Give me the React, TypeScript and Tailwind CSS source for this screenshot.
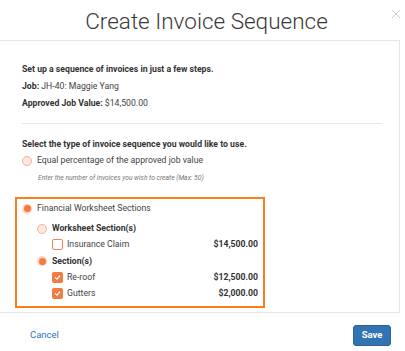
import React from "react";

const Radio = ({ checked }: { checked?: boolean }) => {
    if (checked) {
        return (
            <span className="flex items-center justify-center w-[10px] h-[10px] rounded-full bg-[#fcd4c0] shrink-0">
                <span className="w-[7px] h-[7px] rounded-full bg-[#f47a42]"></span>
            </span>
        );
    }
    return (
        <span className="block w-[10px] h-[10px] rounded-full bg-[#fde9df] border border-[#f6b293] shrink-0"></span>
    );
};

const Checkbox = ({ checked }: { checked?: boolean }) => {
    if (checked) {
        return (
            <span className="flex items-center justify-center w-[11px] h-[11px] rounded-[2px] bg-[#f47a42] shrink-0">
                <svg width="7" height="7" viewBox="0 0 10 10" fill="none">
                    <path
                        d="M2 5.2 L4.2 7.3 L8.2 2.8"
                        stroke="white"
                        strokeWidth="1.8"
                        strokeLinecap="round"
                        strokeLinejoin="round"
                    />
                </svg>
            </span>
        );
    }
    return (
        <span className="block w-[11px] h-[11px] rounded-[2px] border border-[#f0865a] bg-white shrink-0"></span>
    );
};

const ItemRow = ({
    label,
    amount,
    checked,
}: {
    label: string;
    amount: string;
    checked?: boolean;
}) => {
    return (
        <div className="flex items-center h-[16.4px] pl-[29.5px]">
            <Checkbox checked={checked}></Checkbox>
            <span className="ml-[4.5px] text-[#444]">{label}</span>
            <span className="ml-auto font-bold text-[#333]">{amount}</span>
        </div>
    );
};

const App = () => {
    return (
        <div
            className="w-[405px] h-[351px] bg-white overflow-hidden text-[8.7px] text-[#333]"
            style={{ fontFamily: "Roboto, 'Liberation Sans', sans-serif" }}
        >
            <div className="relative h-[40px] flex justify-center items-center">
                <h1 className="text-[22.5px] font-light text-[#3a3a3a] leading-none pt-[3px] pl-[8px]">
                    Create Invoice Sequence
                </h1>
                <span className="absolute right-[4px] top-[9px] text-[#c8c8c8]">
                    <svg width="10" height="10" viewBox="0 0 10 10">
                        <path d="M1 1 L9 9 M9 1 L1 9" stroke="currentColor" strokeWidth="0.9" />
                    </svg>
                </span>
            </div>

            <div className="w-[400px] h-[273px] border-t border-r border-b border-[#e6e6e6] pl-[22px] pr-[17px] pt-[20px]">
                <div className="leading-[17px]">
                    <p className="font-bold">Set up a sequence of invoices in just a few steps.</p>
                    <p>
                        <span className="font-bold">Job:</span>{" "}
                        <span className="text-[#444]">JH-40: Maggie Yang</span>
                    </p>
                    <p>
                        <span className="font-bold">Approved Job Value:</span>{" "}
                        <span className="text-[#444]">$14,500.00</span>
                    </p>
                </div>

                <div className="mt-[10.5px] border-t border-[#e6e6e6]"></div>

                <p className="mt-[12px] font-bold leading-[17px]">
                    Select the type of invoice sequence you would like to use.
                </p>
                <div className="flex items-center gap-[5px] h-[16px]">
                    <Radio></Radio>
                    <span className="text-[#444]">Equal percentage of the approved job value</span>
                </div>
                <p className="mt-[3.5px] pl-[16px] text-[6.7px] italic text-[#777] leading-[12px]">
                    Enter the number of invoices you wish to create (Max: 50)
                </p>

                <div className="mt-[12.5px] -ml-[7px] w-[250px] border-2 border-[#f7801e] pt-[2px] pb-[4px] pl-[5px] pr-[5px]">
                    <div className="flex items-center gap-[5px] h-[16px]">
                        <Radio checked></Radio>
                        <span className="text-[#444]">Financial Worksheet Sections</span>
                    </div>
                    <div className="mt-[4px] flex items-center gap-[5px] h-[16px] pl-[15px]">
                        <Radio></Radio>
                        <span className="font-bold">Worksheet Section(s)</span>
                    </div>
                    <ItemRow label="Insurance Claim" amount="$14,500.00"></ItemRow>
                    <div className="flex items-center gap-[5px] h-[16.4px] pl-[15px]">
                        <Radio checked></Radio>
                        <span className="font-bold">Section(s)</span>
                    </div>
                    <ItemRow label="Re-roof" amount="$12,500.00" checked></ItemRow>
                    <ItemRow label="Gutters" amount="$2,000.00" checked></ItemRow>
                </div>
            </div>

            <div className="flex justify-between items-center pl-[30px] pr-[14px] pt-[12px]">
                <button className="text-[#2f74b9] text-[9.5px]">Cancel</button>
                <button className="w-[38px] h-[21px] rounded-[3px] bg-[#3273b1] text-white font-bold text-[9.5px] border border-[#2a649c]">
                    Save
                </button>
            </div>
        </div>
    );
};

export default App;
